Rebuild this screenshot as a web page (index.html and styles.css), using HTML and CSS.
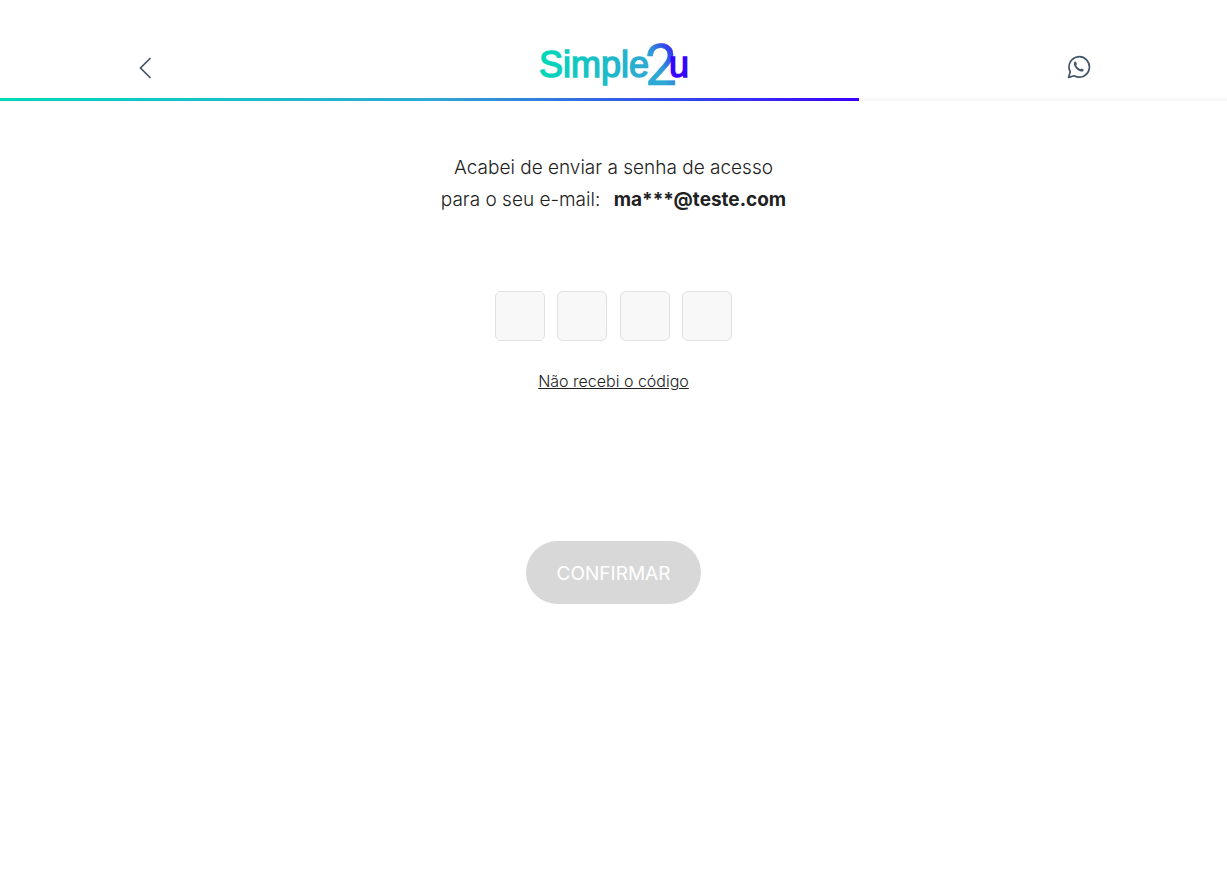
FILE: index.html
```html
<!DOCTYPE html>
<html lang="pt-BR">
<head>
<meta charset="utf-8">
<meta name="viewport" content="width=device-width, initial-scale=1">
<title>Simple2u</title>
<link rel="stylesheet" href="styles.css">
</head>
<body>
<header class="header">
  <button class="icon-button" type="button" aria-label="Voltar">
    <svg width="14" height="22" viewBox="0 0 14 22" fill="none" stroke="currentColor" stroke-width="1.7"><path d="M12.5 1 2.5 11l10 10"/></svg>
  </button>
  <svg class="logo" width="152" height="46" viewBox="0 0 152 46" role="img" aria-label="Simple2u">
    <defs>
      <linearGradient id="word" gradientUnits="userSpaceOnUse" x1="0" y1="0" x2="112" y2="0"><stop stop-color="#00d9b9"/><stop offset="1" stop-color="#2ea9d3"/></linearGradient>
      <linearGradient id="two" gradientUnits="userSpaceOnUse" x1="119" y1="30" x2="139" y2="17"><stop stop-color="#2ea9d3"/><stop offset=".3" stop-color="#2f94d8"/><stop offset="1" stop-color="#3338f0"/></linearGradient>
    </defs>
    <text class="logo-word" x="1" y="35" fill="url(#word)" stroke="url(#word)" stroke-width="1.4">Simple</text>
    <text class="logo-two" x="107" y="43" fill="url(#two)" stroke="url(#two)" stroke-width=".5">2</text>
    <text class="logo-word" x="131" y="35" fill="#3a00ff" stroke="#3a00ff" stroke-width="1.4">u</text>
  </svg>
  <button class="icon-button" type="button" aria-label="WhatsApp">
    <svg width="24" height="24" viewBox="0 0 24 24" fill="none" stroke="currentColor" stroke-width="1.7" stroke-linejoin="round"><path d="M1.6 22.4 3.2 16.7A10.2 10.2 0 1 1 7.2 20.8Z"/><path fill="currentColor" stroke="none" d="M7.8 6.6 9 6.8 9.8 9 9.2 10.3C10.2 12.1 11.6 13.5 13.5 14.3L14.7 13.6 16.7 14.8 16.4 16C15.6 16.8 14.4 16.7 13 16.2 10.4 15.2 8.2 13 7.2 10.4 6.6 8.8 6.8 7.4 7.8 6.6Z"/></svg>
  </button>
</header>
<div class="progress" role="progressbar" aria-label="Progresso" aria-valuenow="70" aria-valuemin="0" aria-valuemax="100"><div class="progress-fill" style="width:70%"></div></div>
<main class="content">
  <p class="message">Acabei de enviar a senha de acesso<br>para o seu e-mail: <strong class="email">ma***@teste.com</strong></p>
  <form class="form">
    <div class="code">
      <input class="digit" type="text" inputmode="numeric" maxlength="1" aria-label="Dígito 1">
      <input class="digit" type="text" inputmode="numeric" maxlength="1" aria-label="Dígito 2">
      <input class="digit" type="text" inputmode="numeric" maxlength="1" aria-label="Dígito 3">
      <input class="digit" type="text" inputmode="numeric" maxlength="1" aria-label="Dígito 4">
    </div>
    <a class="resend" href="#">Não recebi o código</a>
    <button class="confirm" type="submit" disabled>CONFIRMAR</button>
  </form>
</main>
</body>
</html>
```
FILE: styles.css
```css
* { box-sizing: border-box; }
body { margin: 0; background: #fff; color: #212121; font-family: Inter, sans-serif; }
.header { display: grid; grid-template-columns: 1fr auto 1fr; align-items: end; padding: 42px 11% 10px; }
.icon-button { display: flex; justify-self: start; padding: 0; margin: 0 1px 9px 3px; border: 0; background: none; color: #455468; }
.icon-button:last-child { justify-self: end; }
.logo { display: block; overflow: visible; }
.logo-word { font-family: "Liberation Sans", sans-serif; font-size: 36px; }
.logo-two { font-family: Roboto, sans-serif; font-size: 57px; }
.progress { height: 3px; background: #f7f7f7; }
.progress-fill { height: 100%; background: linear-gradient(90deg, #00d9b9, #2ea9d3 50%, #3a00ff); }
.content { display: flex; flex-direction: column; align-items: center; padding: 51px 16px; }
.message { margin: 0; font-size: 19px; font-weight: 300; line-height: 32px; text-align: center; }
.email { margin-left: 8px; font-weight: 700; }
.form { display: flex; flex-direction: column; align-items: center; padding-top: 75px; }
.code { display: flex; justify-content: space-between; width: 237px; }
.digit { width: 50px; height: 50px; padding: 0; border: 1px solid #dee0e4; border-radius: 6px; background: #f8f8f8; font: inherit; font-size: 20px; text-align: center; }
.resend { margin-top: 28px; color: #212121; font-size: 16px; font-weight: 300; line-height: 24px; }
.confirm { margin-top: 148px; padding: 2px 31px 0; border: 0; border-radius: 32px; background: #d8d8d8; color: #fff; font-family: inherit; font-size: 19px; font-weight: 400; line-height: 61px; }
```
